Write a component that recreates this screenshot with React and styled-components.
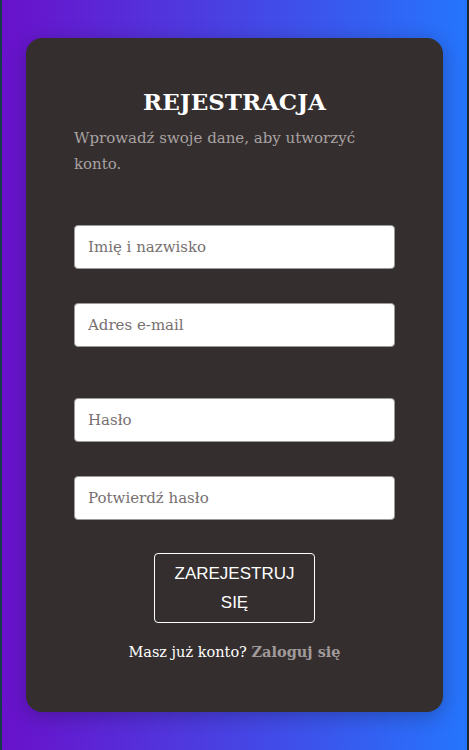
import styled, { createGlobalStyle } from "styled-components";

const GlobalStyle = createGlobalStyle`
  html, body {
    margin: 0;
    padding: 0;
  }
  body {
    font-family: "DejaVu Serif", "Liberation Serif", serif;
  }
  * {
    box-sizing: border-box;
  }
`;

const fields = [
  { id: "name", type: "text", placeholder: "Imię i nazwisko" },
  { id: "email", type: "email", placeholder: "Adres e-mail", extra: true },
  { id: "password", type: "password", placeholder: "Hasło" },
  { id: "confirm", type: "password", placeholder: "Potwierdź hasło" },
];

function App() {
  return (
    <>
      <GlobalStyle />
      <Page>
        <Card>
          <Title>REJESTRACJA</Title>
          <Subtitle>Wprowadź swoje dane, aby utworzyć konto.</Subtitle>
          <Form onSubmit={(e) => e.preventDefault()}>
            {fields.map((f) => (
              <Field key={f.id} $extra={f.extra}>
                <Input type={f.type} placeholder={f.placeholder} />
              </Field>
            ))}
            <SubmitButton type="submit">Zarejestruj się</SubmitButton>
          </Form>
          <Footer>
            Masz już konto? <FooterLink href="#">Zaloguj się</FooterLink>
          </Footer>
        </Card>
      </Page>
    </>
  );
}

export default App;

const Page = styled.div`
  min-height: 750px;
  display: flex;
  align-items: center;
  justify-content: center;
  padding: 0 24px;
  background: linear-gradient(to right, #6a11cb, #2575fc);
  border-left: 2px solid #173a4c;
  border-right: 2px solid #1d2830;
`;

const Card = styled.div`
  width: 417px;
  height: 674px;
  background-color: #342e2e;
  border-radius: 16px;
  padding: 50px 48px 48px;
  box-shadow: 0 4px 20px rgba(0, 0, 0, 0.25);
  display: flex;
  flex-direction: column;
`;

const Title = styled.h2`
  margin: 0;
  text-align: center;
  color: #ffffff;
  font-size: 23px;
  font-weight: 700;
  line-height: 28px;
`;

const Subtitle = styled.p`
  margin: 9px 0 0;
  color: #a8a2a2;
  font-size: 15px;
  line-height: 26px;
`;

const Form = styled.form`
  margin-top: 48px;
  display: flex;
  flex-direction: column;
  align-items: center;
`;

const Field = styled.div`
  width: 100%;
  margin-bottom: ${(p) => (p.$extra ? "51px" : "34px")};
`;

const Input = styled.input`
  width: 100%;
  height: 44px;
  padding: 0 13px;
  border: 1px solid #9a9a9a;
  border-radius: 4px;
  background: #ffffff;
  font-family: "DejaVu Serif", "Liberation Serif", serif;
  font-size: 15px;
  color: #333;
  &::placeholder {
    color: #777070;
  }
  &:focus {
    outline: none;
  }
`;

const SubmitButton = styled.button`
  width: 161px;
  margin-top: -1px;
  padding: 5px 18px;
  background: transparent;
  border: 1px solid #ffffff;
  border-radius: 4px;
  color: #ffffff;
  font-family: "Liberation Sans", Arial, sans-serif;
  font-size: 17px;
  line-height: 29px;
  text-transform: uppercase;
  cursor: pointer;
`;

const Footer = styled.p`
  margin: 18px 0 0;
  text-align: center;
  color: #ffffff;
  font-size: 14.5px;
  line-height: 22px;
`;

const FooterLink = styled.a`
  color: #a09a9a;
  font-weight: 700;
  text-decoration: none;
`;
